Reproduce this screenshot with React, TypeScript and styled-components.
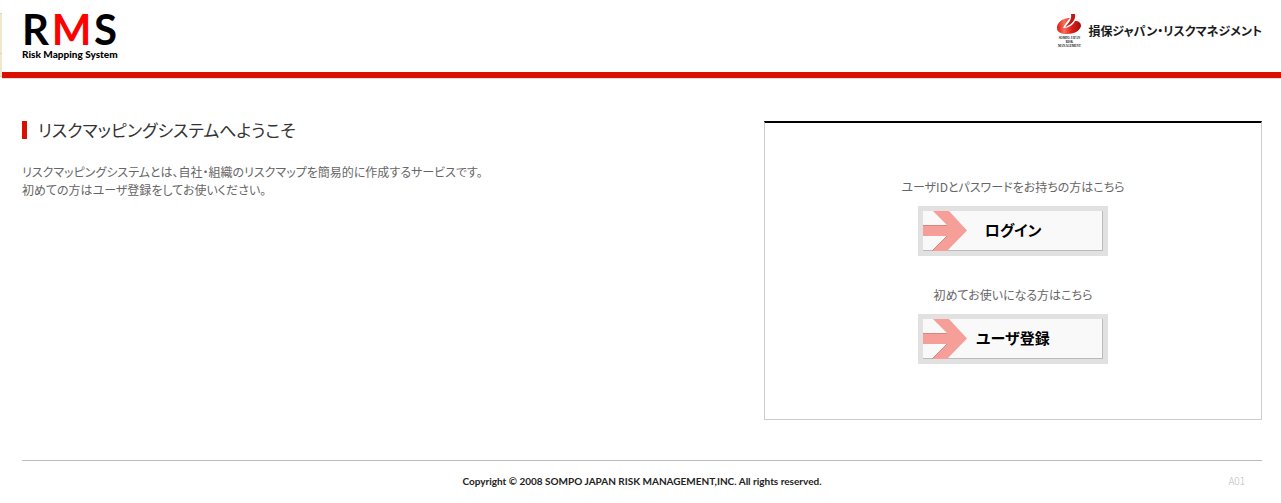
import React from "react";
import styled, { createGlobalStyle } from "styled-components";

const GlobalStyle = createGlobalStyle`
  * { box-sizing: border-box; }
  body {
    margin: 0;
    background: #fff;
    color: #666;
    font: 12px/18px "Noto Sans CJK JP", sans-serif;
    font-feature-settings: "palt";
  }
  h1, p { margin: 0; }
`;

const Frame = styled.div`
  display: flex;
  align-items: flex-start;
`;

const EdgeStrip = styled.div`
  flex: none;
  width: 2px;
  height: 64px;
  margin-top: 13px;
  background: linear-gradient(#d8d4c8 1px, #f0e8cd 1px 40px, #d8d4c8 40px 41px, #f0e8cd 41px 63px, #d8d4c8 63px);
`;

const Page = styled.div`
  flex: 1;
  min-width: 0;
`;

const Header = styled.header`
  display: flex;
  justify-content: space-between;
  align-items: flex-start;
  height: 79px;
  padding: 11px 19px 0 20px;
  border-bottom: 1px solid #e3dedd;
  box-shadow: inset 0 -6px #d91000;
`;

const Logo = styled.a`
  display: block;
  color: #000;
  text-decoration: none;
  font-family: Lato, sans-serif;
`;

const LogoLetters = styled.span`
  display: flex;
  justify-content: space-between;
  width: 95px;
  font-size: 42px;
  line-height: 36px;
  font-weight: 700;
`;

const LogoRed = styled.span`
  color: #f00;
`;

const LogoCaption = styled.span`
  display: block;
  font-size: 10px;
  line-height: 14px;
  font-weight: 900;
  white-space: nowrap;
`;

const Company = styled.a`
  display: flex;
  align-items: center;
  gap: 6px;
  padding-top: 3px;
  color: #1a1a1a;
  font-size: 12px;
  line-height: 34px;
  font-weight: 700;
  text-decoration: none;
  white-space: nowrap;
`;

const Emblem = styled.span`
  display: flex;
  flex-direction: column;
  align-items: center;
  width: 26px;
  color: #111;
  font: 700 3px/4px "Liberation Serif", serif;
`;

const Main = styled.main`
  display: flex;
  justify-content: space-between;
  align-items: flex-start;
  gap: 40px;
  padding: 42px 19px 40px 20px;
`;

const Intro = styled.section`
  flex: 1;
`;

const Title = styled.h1`
  padding-left: 11px;
  border-left: 5px solid #d91000;
  margin-bottom: 24px;
  color: #333;
  font-size: 17px;
  line-height: 18px;
  font-weight: 400;
`;

const Panel = styled.section`
  display: flex;
  flex-direction: column;
  align-items: center;
  gap: 30px;
  flex: 0 0 498px;
  padding: 55px 0;
  border: 1px solid #ccc;
  border-top: 2px solid #000;
`;

const Choice = styled.div`
  display: flex;
  flex-direction: column;
  align-items: center;
  gap: 10px;
`;

const ActionButton = styled.button`
  display: flex;
  align-items: center;
  width: 190px;
  height: 50px;
  padding: 0;
  border: 5px solid #e1e1e1;
  background: #f9f9f9;
  box-shadow: inset -1px -1px #bbb;
  color: #000;
  font: 700 15px/20px "Noto Sans CJK JP", sans-serif;
  font-feature-settings: "palt";
  cursor: pointer;
`;

const ButtonLabel = styled.span`
  flex: 1;
  padding: 0 44px 2px 0;
  text-align: center;
`;

const Footer = styled.footer`
  display: grid;
  grid-template-columns: 1fr auto 1fr;
  align-items: center;
  margin: 0 19px 0 20px;
  padding: 10px 0;
  border-top: 1px solid #bbb;
`;

const Copyright = styled.small`
  grid-column: 2;
  color: #222;
  font: 700 10px/20px Lato, sans-serif;
`;

const ScreenCode = styled.span`
  justify-self: end;
  padding-right: 17px;
  color: #bbb;
  font-size: 10px;
  font-weight: 300;
`;

function EmblemMark() {
  return (
    <svg width="24" height="22" viewBox="0 0 24 22" aria-hidden="true">
      <defs>
        <linearGradient id="ball" x1="0" x2="1">
          <stop offset="0" stopColor="#dc1a14" />
          <stop offset="0.3" stopColor="#f5715a" />
          <stop offset="0.6" stopColor="#e0201a" />
          <stop offset="1" stopColor="#a00c0c" />
        </linearGradient>
      </defs>
      <path d="M0 14C0 8 6 4 13 4C10 7 8 10 6 14C12 14 16 11 18 7C22 7 24 9 24 12C23 17 17 20 10 20C4 20 0 18 0 14Z" fill="url(#ball)" />
      <path d="M14 0H18C19 5 16 10 8 13C12 9 15 5 14 0Z" fill="#c01814" />
    </svg>
  );
}

function Arrow() {
  return (
    <svg width="44" height="40" viewBox="0 0 44 40" aria-hidden="true">
      <path d="M10 0H26L44 19.5L24 40H9L24 25H0V14H24Z" fill="#f59f98" />
      <path d="M0 14.5H24M24 25L9 40" stroke="#d88780" fill="none" />
    </svg>
  );
}

function Action({ hint, label }: { hint: string; label: string }) {
  return (
    <Choice>
      <p>{hint}</p>
      <ActionButton type="button">
        <Arrow />
        <ButtonLabel>{label}</ButtonLabel>
      </ActionButton>
    </Choice>
  );
}

export default function App() {
  return (
    <>
      <GlobalStyle />
      <Frame>
        <EdgeStrip />
        <Page>
          <Header>
            <Logo href="#">
              <LogoLetters>
                <span>R</span>
                <LogoRed>M</LogoRed>
                <span>S</span>
              </LogoLetters>
              <LogoCaption>Risk Mapping System</LogoCaption>
            </Logo>
            <Company href="#">
              <Emblem>
                <EmblemMark />
                <span>SOMPO JAPAN</span>
                <span>RISK</span>
                <span>MANAGEMENT</span>
              </Emblem>
              損保ジャパン・リスクマネジメント
            </Company>
          </Header>
          <Main>
            <Intro>
              <Title>リスクマッピングシステムへようこそ</Title>
              <p>
                リスクマッピングシステムとは、自社・組織のリスクマップを簡易的に作成するサービスです。
                <br />
                初めての方はユーザ登録をしてお使いください。
              </p>
            </Intro>
            <Panel>
              <Action hint="ユーザIDとパスワードをお持ちの方はこちら" label="ログイン" />
              <Action hint="初めてお使いになる方はこちら" label="ユーザ登録" />
            </Panel>
          </Main>
          <Footer>
            <Copyright>Copyright © 2008 SOMPO JAPAN RISK MANAGEMENT,INC. All rights reserved.</Copyright>
            <ScreenCode>A01</ScreenCode>
          </Footer>
        </Page>
      </Frame>
    </>
  );
}
